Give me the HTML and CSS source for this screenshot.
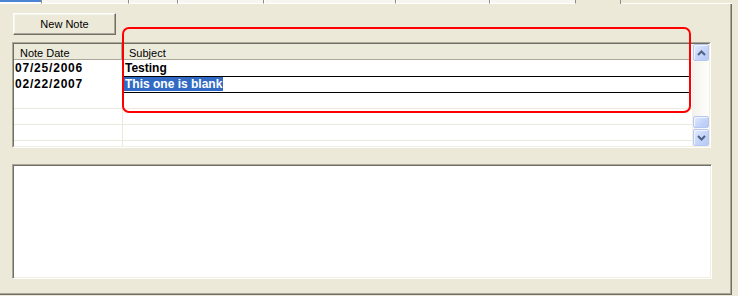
FILE: index.html
```html
<!DOCTYPE html>
<html>
<head>
<meta charset="utf-8">
<link rel="stylesheet" href="styles.css">
</head>
<body>
<div class="tabs">
  <span class="tab first"></span>
  <span class="tab t2"></span>
  <span class="tab t3"></span>
  <span class="tab t4"></span>
  <span class="tab t5"></span>
  <span class="tab t6"></span>
  <span class="tab t7"></span>
  <span class="tab selected"></span>
  <span class="tab-rest"></span>
</div>
<div class="panel">
  <button class="btn">New Note</button>
  <div class="grid">
    <div class="grid-in">
      <div class="list">
        <div class="hdr">
          <div class="hc c1">Note Date</div>
          <div class="hc c2">Subject</div>
        </div>
        <div class="row">
          <div class="c1">07/25/2006</div>
          <div class="c2">Testing</div>
        </div>
        <div class="row sel">
          <div class="c1">02/22/2007</div>
          <div class="c2"><span class="hl">This one is blank</span></div>
        </div>
        <div class="row empty"><div class="c1"></div><div class="c2"></div></div>
        <div class="row empty"><div class="c1"></div><div class="c2"></div></div>
        <div class="row empty"><div class="c1"></div><div class="c2"></div></div>
        <div class="row empty"><div class="c1"></div><div class="c2"></div></div>
      </div>
      <div class="vs">
        <div class="sb up">
          <svg width="9" height="6" viewBox="0 0 9 6"><path d="M1 5 L4.5 1.5 L8 5" fill="none" stroke="#4D6185" stroke-width="2"/></svg>
        </div>
        <div class="track"></div>
        <div class="thumb"></div>
        <div class="gap"></div>
        <div class="sb down">
          <svg width="9" height="6" viewBox="0 0 9 6"><path d="M1 1 L4.5 4.5 L8 1" fill="none" stroke="#4D6185" stroke-width="2"/></svg>
        </div>
      </div>
    </div>
  </div>
  <div class="memo"></div>
</div>
<div class="callout"></div>
</body>
</html>
```

FILE: styles.css
```css
html, body {
  margin: 0;
  padding: 0;
  width: 738px;
  height: 296px;
  overflow: hidden;
  background: #ECE9D8;
  font-family: "Liberation Sans", Arial, sans-serif;
}
body { position: relative; }

.tabs {
  display: flex;
  height: 4px;
}
.tab {
  box-sizing: border-box;
  height: 4px;
  background: #F6F5F0;
  border-left: 1px solid #fff;
  border-right: 1px solid #8F8D84;
  border-bottom: 1px solid #fff;
}
.tab.first { width: 42px; border-left: none; background: #fff; box-shadow: inset 0 2px 0 #4C83D2; }
.tab.t2 { width: 87px; }
.tab.t3 { width: 49px; }
.tab.t4 { width: 86px; }
.tab.t5 { width: 132px; }
.tab.t6 { width: 94px; }
.tab.t7 { width: 86px; }
.tab.selected {
  width: 45px;
  background: #ECE9D8;
  border-left: 1px solid #ECE9D8;
  border-right: 1px solid #8F8D84;
  border-bottom: none;
}
.tab-rest {
  box-sizing: border-box;
  width: 111px;
  height: 4px;
  border-bottom: 1px solid #fff;
}

.panel {
  box-sizing: border-box;
  width: 732px;
  height: 291px;
  padding: 9px 0 0 12px;
  display: flex;
  flex-direction: column;
  align-items: flex-start;
  border-right: 1px solid #716F64;
  border-bottom: 1px solid #716F64;
  box-shadow: inset -1px -1px 0 #ACA899;
}

.btn {
  margin: 0 0 0 1px;
  width: 103px;
  height: 22px;
  box-sizing: border-box;
  padding: 0;
  font-family: "Liberation Sans", Arial, sans-serif;
  font-size: 11px;
  color: #000;
  background: #ECE9D8;
  border: 1px solid;
  border-color: #fff #716F64 #716F64 #fff;
  box-shadow: inset -1px -1px 0 #ACA899, inset 1px 1px 0 #F6F5F0;
}

.grid {
  margin-top: 7px;
  box-sizing: border-box;
  width: 699px;
  height: 106px;
  border: 1px solid;
  border-color: #ACA899 #fff #fff #ACA899;
}
.grid-in {
  box-sizing: border-box;
  height: 100%;
  display: flex;
  border: 1px solid;
  border-color: #716F64 #F1EFE2 #F1EFE2 #716F64;
}
.list {
  width: 678px;
  height: 102px;
  overflow: hidden;
  background: #fff;
}

.hdr {
  display: flex;
  height: 16px;
  font-size: 11px;
}
.hc {
  box-sizing: border-box;
  height: 16px;
  padding-top: 3px;
  line-height: 12px;
  background: #EBEADB;
  border-bottom: 1px solid #ACA899;
  white-space: nowrap;
}
.hc.c1 {
  width: 108px;
  padding-left: 6px;
  border-right: 1px solid #ACA899;
}
.hc.c2 {
  flex: 1;
  margin-right: 2px;
  padding-left: 6px;
  border-left: 1px solid #fff;
  border-right: 1px solid #ACA899;
}

.row {
  display: flex;
  height: 16px;
  font-size: 12px;
  font-weight: bold;
  line-height: 16px;
  color: #000;
  white-space: nowrap;
}
.row .c1 {
  box-sizing: border-box;
  width: 108px;
  padding-left: 1px;
  letter-spacing: 0.8px;
}
.row .c2 {
  box-sizing: border-box;
  flex: 1;
  padding-left: 3px;
}
.row.sel { height: 17px; }
.row.sel .c2 {
  height: 17px;
  margin-right: 2px;
  padding-left: 0;
  line-height: 14px;
  border: 1px solid #000;
}
.hl {
  background: #316AC5;
  color: #fff;
  padding: 0 1px 0 2px;
}
.row.empty {
  box-sizing: border-box;
  border-bottom: 1px solid #EBE9DA;
}
.row.empty .c2 {
  border-left: 1px solid #EBE9DA;
}

.vs {
  width: 17px;
  height: 102px;
  display: flex;
  flex-direction: column;
  background: linear-gradient(to right, #F3F1EC, #FEFEFB);
}
.sb, .thumb {
  box-sizing: border-box;
  width: 16px;
  margin-left: 1px;
  border: 1px solid #B6C8F0;
  border-radius: 2px;
  background: linear-gradient(135deg, #E3EBFE 0%, #C7D6FA 50%, #B6CAF6 100%);
  box-shadow: inset 1px 1px 0 #F0F4FF;
}
.sb {
  height: 17px;
  display: flex;
  align-items: center;
  justify-content: center;
}
.sb svg { display: block; }
.track { height: 55px; }
.thumb { height: 12px; }
.gap { height: 1px; }

.memo {
  margin-top: 16px;
  box-sizing: border-box;
  width: 700px;
  height: 115px;
  background: #fff;
  border: 1px solid;
  border-color: #ACA899 #fff #fff #ACA899;
  box-shadow: inset 1px 1px 0 #716F64, inset -1px -1px 0 #F1EFE2;
}

.callout {
  position: absolute;
  left: 122px;
  top: 27px;
  width: 569px;
  height: 86px;
  box-sizing: border-box;
  border: 2px solid #FF0000;
  border-radius: 7px;
  pointer-events: none;
}
```
